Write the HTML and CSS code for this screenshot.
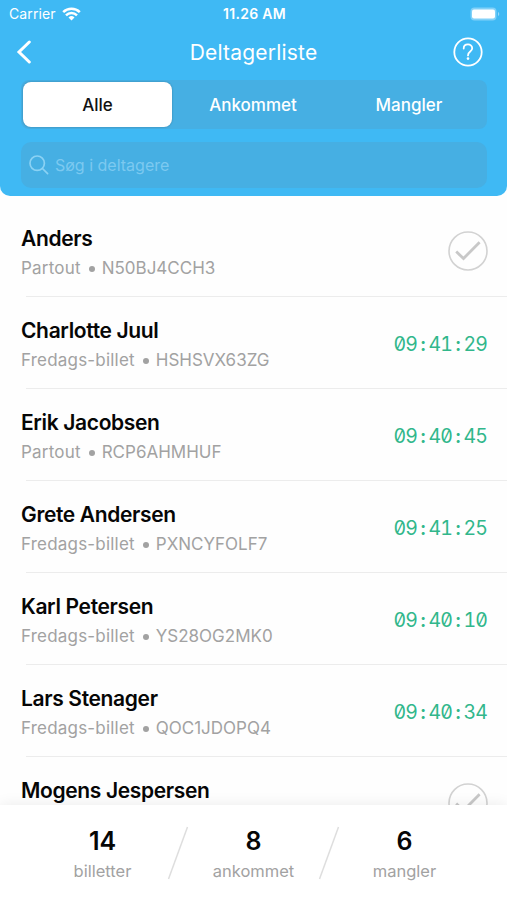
FILE: index.html
```html
<!DOCTYPE html>
<html lang="da">
<head>
  <meta charset="UTF-8" />
  <title>Deltagerliste</title>
  <link rel="stylesheet" href="styles.css">
</head>
<body>
  <div class="app">
    <header class="header">
      <div class="statusbar">
        <div class="carrier">
          <span>Carrier</span>
          <svg width="19" height="14" viewBox="0 0 19 14" fill="none" stroke="#fff" stroke-width="2.5">
            <path d="M1.2 5.2a11.8 11.8 0 0 1 16.6 0M4 8.3a7.8 7.8 0 0 1 11 0" />
            <path d="M9.5 13.5L6.5 10.5a4.3 4.3 0 0 1 6 0z" fill="#fff" stroke="none" />
          </svg>
        </div>
        <div class="clock">11.26 AM</div>
        <div class="battery">
          <svg width="30" height="14" viewBox="0 0 30 14">
            <rect x="0.5" y="0.5" width="26" height="13" rx="4" fill="#fff" fill-opacity="0.35" />
            <rect x="2" y="2.5" width="23" height="9" rx="2" fill="#fff" />
            <path d="M28 5a2.2 2.2 0 0 1 0 4z" fill="#fff" fill-opacity="0.45" />
          </svg>
        </div>
      </div>

      <div class="navbar">
        <svg width="30" height="24" viewBox="0 0 30 24" fill="none" stroke="#fff" stroke-width="3" stroke-linecap="round">
          <path d="M13.3 2L3 12L13.3 22" />
        </svg>
        <h1 class="title">Deltagerliste</h1>
        <svg width="30" height="30" viewBox="0 0 30 30" fill="none" stroke="#fff" stroke-width="1.8">
          <circle cx="15" cy="15" r="13.7" />
          <path d="M10.7 11.6C10.7 6.1 19.2 6.2 19.2 11.2C19.2 14.8 15 14.1 15 18.4" stroke-linecap="round" />
          <circle cx="15" cy="21.6" r="1.3" fill="#fff" stroke="none" />
        </svg>
      </div>

      <div class="tabs">
        <div class="tab active">Alle</div>
        <div class="tab">Ankommet</div>
        <div class="tab">Mangler</div>
      </div>

      <div class="search">
        <svg width="20" height="20" viewBox="0 0 20 20" fill="none" stroke="#8bd2f4" stroke-width="1.7" stroke-linecap="round">
          <circle cx="8.2" cy="8.2" r="7.2" />
          <path d="M13.5 13.5L18.6 18.6" />
        </svg>
        <span>Søg i deltagere</span>
      </div>
    </header>

    <main class="list">
      <div class="row">
        <div class="person">
          <div class="name">Anders</div>
          <div class="ticket"><span class="type">Partout</span><i class="dot"></i><span>N50BJ4CCH3</span></div>
        </div>
        <svg class="check" width="40" height="40" viewBox="0 0 40 40" fill="none">
          <circle cx="20" cy="20" r="19" stroke="#d2d2d2" stroke-width="1.6" />
          <path d="M8.2 20.6L15.5 27.5L31.6 11.3" stroke="#c8c8c8" stroke-width="2.8" />
        </svg>
      </div>
      <div class="row">
        <div class="person">
          <div class="name">Charlotte Juul</div>
          <div class="ticket"><span class="type">Fredags-billet</span><i class="dot"></i><span>HSHSVX63ZG</span></div>
        </div>
        <div class="time">09<span class="colon">:</span>41<span class="colon">:</span>29</div>
      </div>
      <div class="row">
        <div class="person">
          <div class="name">Erik Jacobsen</div>
          <div class="ticket"><span class="type">Partout</span><i class="dot"></i><span>RCP6AHMHUF</span></div>
        </div>
        <div class="time">09<span class="colon">:</span>40<span class="colon">:</span>45</div>
      </div>
      <div class="row">
        <div class="person">
          <div class="name">Grete Andersen</div>
          <div class="ticket"><span class="type">Fredags-billet</span><i class="dot"></i><span>PXNCYFOLF7</span></div>
        </div>
        <div class="time">09<span class="colon">:</span>41<span class="colon">:</span>25</div>
      </div>
      <div class="row">
        <div class="person">
          <div class="name">Karl Petersen</div>
          <div class="ticket"><span class="type">Fredags-billet</span><i class="dot"></i><span>YS28OG2MK0</span></div>
        </div>
        <div class="time">09<span class="colon">:</span>40<span class="colon">:</span>10</div>
      </div>
      <div class="row">
        <div class="person">
          <div class="name">Lars Stenager</div>
          <div class="ticket"><span class="type">Fredags-billet</span><i class="dot"></i><span>QOC1JDOPQ4</span></div>
        </div>
        <div class="time">09<span class="colon">:</span>40<span class="colon">:</span>34</div>
      </div>
      <div class="row">
        <div class="person">
          <div class="name">Mogens Jespersen</div>
        </div>
        <svg class="check" width="40" height="40" viewBox="0 0 40 40" fill="none">
          <circle cx="20" cy="20" r="19" stroke="#d2d2d2" stroke-width="1.6" />
          <path d="M8.2 20.6L15.5 27.5L31.6 11.3" stroke="#c8c8c8" stroke-width="2.8" />
        </svg>
      </div>
    </main>

    <footer class="footer">
      <div class="stat">
        <div class="number">14</div>
        <div class="label">billetter</div>
      </div>
      <svg width="22" height="54" viewBox="0 0 22 54" stroke="#dedede" stroke-width="1.5">
        <path d="M20.5 1L1.5 53" />
      </svg>
      <div class="stat">
        <div class="number">8</div>
        <div class="label">ankommet</div>
      </div>
      <svg width="22" height="54" viewBox="0 0 22 54" stroke="#dedede" stroke-width="1.5">
        <path d="M20.5 1L1.5 53" />
      </svg>
      <div class="stat">
        <div class="number">6</div>
        <div class="label">mangler</div>
      </div>
    </footer>
  </div>
</body>
</html>
```
FILE: styles.css
```css
* {
  box-sizing: border-box;
}

body {
  margin: 0;
  background-color: #fefefe;
  font-family: Inter, "Open Sans", sans-serif;
}

svg {
  display: block;
  flex-shrink: 0;
}

.app {
  display: flex;
  flex-direction: column;
  height: 900px;
  overflow: hidden;
}

.header {
  height: 196px;
  flex-shrink: 0;
  background-color: #3fb9f4;
  color: white;
  border-radius: 0 0 10px 10px;
}

.statusbar {
  display: grid;
  grid-template-columns: 1fr auto 1fr;
  align-items: center;
  height: 27px;
  padding: 0 7px 0 9px;
  font-size: 14px;
}

.carrier {
  display: flex;
  align-items: center;
  gap: 6px;
  letter-spacing: 0.1px;
}

.clock {
  font-weight: 600;
  font-size: 14px;
  letter-spacing: 0.3px;
}

.battery {
  justify-self: end;
}

.navbar {
  display: flex;
  justify-content: space-between;
  align-items: center;
  height: 50px;
  padding: 0 24px 0 16px;
}

.title {
  margin: 0 0 0 8px;
  font-size: 21px;
  font-weight: 400;
  letter-spacing: 0.2px;
}

.tabs {
  display: grid;
  grid-template-columns: 152px 156px 1fr;
  height: 49px;
  margin: 3px 20px 0 21px;
  padding: 2px 0 2px 2px;
  border-radius: 8px;
  background-color: #46afe3;
  font-size: 17px;
  font-weight: 500;
}

.tab {
  display: flex;
  align-items: center;
  justify-content: center;
}

.tab.active {
  width: 149px;
  background-color: white;
  color: #111;
  border-radius: 8px;
  box-shadow: 0 0 2px rgba(0,0,0,0.3);
}

.search {
  display: flex;
  align-items: center;
  gap: 6px;
  height: 46px;
  margin: 13px 20px 0 21px;
  padding-left: 8px;
  border-radius: 10px;
  background-color: #46afe3;
  color: #7cc9f0;
  font-size: 16px;
}

.list {
  flex: 1;
  min-height: 0;
  overflow: hidden;
  padding-top: 9px;
}

.row {
  display: flex;
  justify-content: space-between;
  align-items: flex-start;
  height: 92px;
  padding: 20px 19px 0 21px;
  background: linear-gradient(#ececec, #ececec) 26px 91px / 100% 1px no-repeat;
}

.name {
  height: 28px;
  line-height: 27px;
  font-size: 21px;
  font-weight: 600;
  letter-spacing: -0.35px;
  color: #060606;
}

.ticket {
  display: flex;
  align-items: center;
  height: 30px;
  font-size: 17px;
  color: #a2a2a2;
}

.type {
  letter-spacing: 0.2px;
}

.dot {
  width: 6px;
  height: 6px;
  margin: 2px 7px 0 8px;
  border-radius: 50%;
  background-color: #a2a2a2;
}

.check {
  margin-top: 6px;
}

.time {
  margin: 14px 1px 0 0;
  line-height: 26px;
  font-size: 19.5px;
  letter-spacing: -0.9px;
  font-feature-settings: "tnum", "zero";
  color: #31b78b;
}

.colon {
  display: inline-block;
  width: 11.5px;
  text-align: center;
  font-weight: 600;
}

.footer {
  display: flex;
  justify-content: center;
  height: 95px;
  flex-shrink: 0;
  padding-top: 21px;
  background-color: white;
  box-shadow: 0 0 14px rgba(0,0,0,0.08);
}

.stat {
  width: 129px;
  text-align: center;
}

.number {
  line-height: 31px;
  font-size: 25px;
  font-weight: 600;
  color: #060606;
}

.label {
  line-height: 29px;
  font-size: 16.5px;
  color: #a2a2a2;
}
```
